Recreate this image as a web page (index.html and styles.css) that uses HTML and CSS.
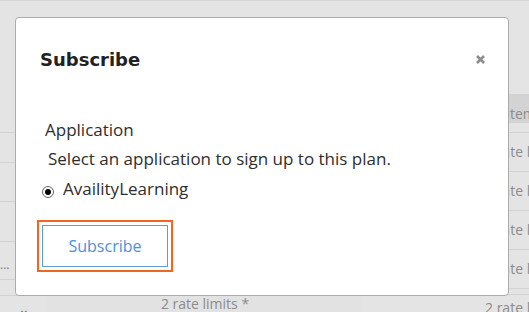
FILE: index.html
```html
<!DOCTYPE html>
<html>
<head>
<meta charset="utf-8">
<link rel="stylesheet" href="styles.css">
</head>
<body>
<div class="backdrop">
  <div class="col col-left">
    <div class="cell h132"></div>
    <div class="cell h30"></div>
    <div class="cell h39"></div>
    <div class="cell h40"></div>
    <div class="cell h38 dots">...</div>
    <div class="cell h16"></div>
    <div class="cell last chev">&#x2304;</div>
  </div>
  <div class="col col-mid">
    <div class="fill"></div>
    <div class="cell last center">2 rate limits *</div>
  </div>
  <div class="col col-right">
    <div class="cell h94"></div>
    <div class="cell head">Items</div>
    <div class="cell gap10"></div>
    <div class="cell row">2 rate limits</div>
    <div class="cell row">2 rate limits</div>
    <div class="cell row">2 rate limits</div>
    <div class="cell row">2 rate limits</div>
    <div class="cell gap6"></div>
    <div class="cell last">2 rate limits</div>
  </div>
</div>

<div class="modal">
  <div class="modal-header">
    <h2 class="modal-title">Subscribe</h2>
    <button class="close" aria-label="Close">
      <svg width="9" height="9" viewBox="0 0 9 9"><path d="M1 1 L8 8 M8 1 L1 8" stroke="#8c8c8c" stroke-width="2.6" stroke-linecap="butt"/></svg>
    </button>
  </div>
  <div class="modal-body">
    <div class="label">Application</div>
    <div class="help">Select an application to sign up to this plan.</div>
    <label class="option"><span class="radio"><span class="dot"></span></span>AvailityLearning</label>
    <div class="actions">
      <button class="btn">Subscribe</button>
    </div>
  </div>
</div>
</body>
</html>
```

FILE: styles.css
```css
html, body {
  margin: 0;
  padding: 0;
}
body {
  width: 529px;
  height: 312px;
  overflow: hidden;
  background: #e4e4e4;
  font-family: "Open Sans", "Liberation Sans", sans-serif;
  position: relative;
}
.backdrop {
  display: flex;
  height: 312px;
  border-top: 1px solid #d6d6d6;
  box-sizing: border-box;
  color: #8c8c8c;
  font-size: 14px;
}
.col {
  display: flex;
  flex-direction: column;
  min-width: 0;
}
.col-left { width: 47px; flex-shrink: 0; }
.col-mid { width: 316px; flex-shrink: 0; }
.col-right { flex: 1; overflow: hidden; }
.cell {
  box-sizing: border-box;
  border-bottom: 1px solid #d2d2d2;
  overflow: hidden;
  white-space: nowrap;
  flex-shrink: 0;
}
.h132 { height: 132px; }
.h30 { height: 30px; }
.h39 { height: 39px; }
.h40 { height: 40px; }
.h38 { height: 38px; }
.h16 { height: 16px; }
.h94 { height: 93px; border-bottom: none; }
.gap10 { height: 10px; }
.gap6 { height: 6px; }
.dots { padding: 18px 0 0 0; line-height: 10px; font-size: 12px; color: #777; }
.chev { padding-left: 18px; line-height: 12px; font-size: 14px; color: #777; }
.fill { height: 294px; }
.last { flex: 1 1 auto; border-bottom: none; line-height: 16px; padding-top: 5px; }
.col-mid .last { background: #e2e2e2; }
.center { text-align: center; }
.head {
  height: 29px;
  background: #d3d3d3;
  line-height: 20px;
  padding-top: 10px;
  padding-left: 143px;
  border-bottom: none;
}
.row {
  height: 39px;
  line-height: 37px;
  padding-left: 122px;
}
.col-right .last { padding-left: 122px; }

.modal {
  position: absolute;
  left: 15px;
  top: 17px;
  width: 494px;
  height: 279px;
  box-sizing: border-box;
  background: #fff;
  border: 1px solid #ababab;
  border-radius: 4px;
}
.modal-header {
  display: flex;
  justify-content: space-between;
  align-items: center;
  padding: 30px 23px 0 24px;
}
.modal-title {
  margin: 0;
  font-family: "DejaVu Sans", sans-serif;
  font-weight: bold;
  font-size: 18px;
  line-height: 24px;
  color: #222;
}
.close {
  border: 0;
  background: none;
  padding: 0;
  width: 9px;
  height: 9px;
  display: flex;
  margin-top: -2px;
}
.modal-body {
  padding: 47px 0 0 29px;
  color: #2e2e2e;
  font-size: 17px;
}
.label {
  line-height: 22px;
}
.help {
  padding-left: 3px;
  margin-top: 7px;
  line-height: 22px;
}
.option {
  display: flex;
  align-items: center;
  margin-top: 8px;
  margin-left: -3px;
  line-height: 22px;
}
.radio {
  width: 12px;
  height: 12px;
  box-sizing: border-box;
  border: 1px solid #666;
  border-radius: 50%;
  display: flex;
  align-items: center;
  justify-content: center;
  margin: 6px 9px 0 0;
  background: #fff;
}
.dot {
  width: 6px;
  height: 6px;
  border-radius: 50%;
  background: #000;
}
.actions {
  margin-top: 25px;
  margin-left: -3px;
  display: flex;
}
.btn {
  width: 126px;
  height: 42px;
  box-sizing: border-box;
  background: #fff;
  border: 1px solid #5b9be6;
  color: #4a90e2;
  font-family: "Open Sans", "Liberation Sans", sans-serif;
  font-size: 16px;
  outline: 2px solid #f26522;
  outline-offset: 3px;
  padding: 0;
}
```
